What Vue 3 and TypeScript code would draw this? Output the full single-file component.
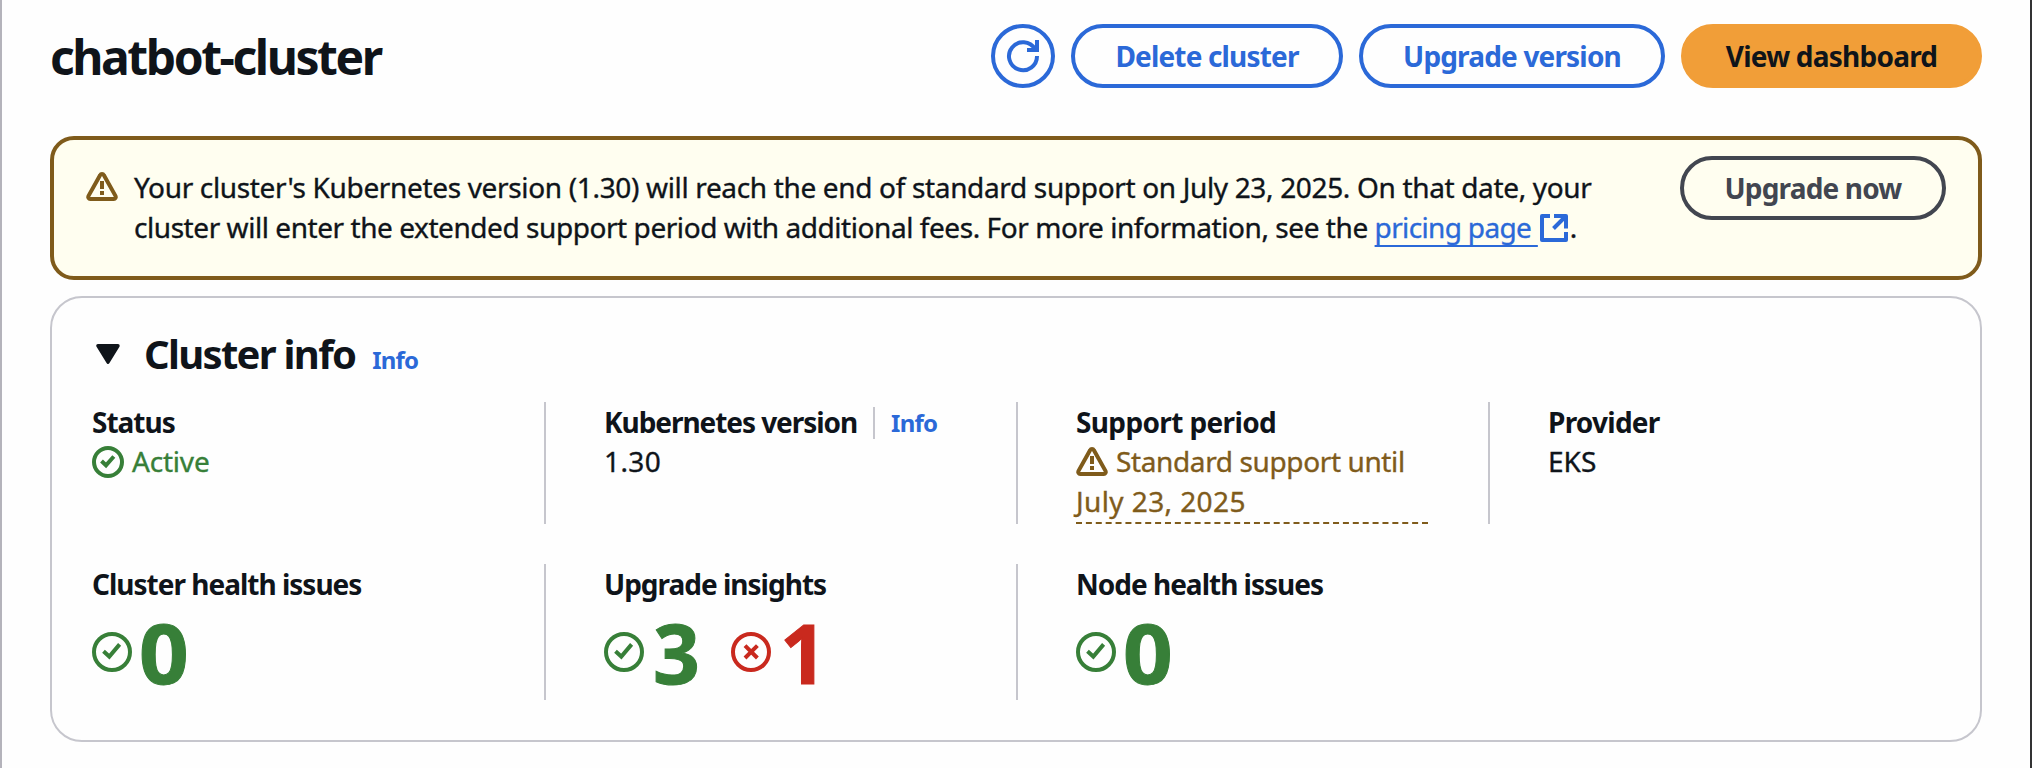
<script setup lang="ts">
interface Metric {
  kind: 'ok' | 'error'
  value: number
}

interface MetricCell {
  title: string
  metrics: Metric[]
}

const metricCells: MetricCell[] = [
  { title: 'Cluster health issues', metrics: [{ kind: 'ok', value: 0 }] },
  {
    title: 'Upgrade insights',
    metrics: [
      { kind: 'ok', value: 3 },
      { kind: 'error', value: 1 },
    ],
  },
  { title: 'Node health issues', metrics: [{ kind: 'ok', value: 0 }] },
]
</script>

<template>
  <main class="page">
    <header class="header">
      <h1 class="title">chatbot-cluster</h1>
      <div class="actions">
        <button class="btn btn-icon" aria-label="Refresh">
          <svg class="icon" viewBox="0 0 32 32">
            <path d="M30 16A14 14 0 1 1 28 9" />
            <path d="M30 0v10H20" />
          </svg>
        </button>
        <button class="btn btn-delete">Delete cluster</button>
        <button class="btn btn-upgrade">Upgrade version</button>
        <button class="btn btn-primary">View dashboard</button>
      </div>
    </header>

    <section class="alert">
      <svg class="icon warning alert-icon" viewBox="0 0 32 32">
        <path d="M14.2 4.1 2.4 25.1a2 2 0 0 0 1.8 2.9h23.6a2 2 0 0 0 1.8-2.9L17.8 4.1a2 2 0 0 0-3.6 0Z" />
        <path d="M16 10v8M16 20v4" />
      </svg>
      <p class="alert-text">
        <span class="line-one">Your cluster's Kubernetes version (1.30) will reach the end of standard support on July 23, 2025. On that date, your</span><br />
        <span class="line-two">cluster will enter the extended support period with additional fees. For more information, see the </span><a class="link">pricing page&nbsp;</a><svg class="icon external" viewBox="0 0 32 32">
          <path d="M12 4H4v24h24v-8" />
          <path d="M16 4h12v12.5M27.5 4.5 15.5 16.5" />
        </svg>.
      </p>
      <button class="btn btn-neutral">Upgrade now</button>
    </section>

    <section class="card">
      <div class="card-head">
        <svg class="caret" viewBox="0 0 24 20">
          <path d="M2 1.8h20L12 18.2Z" />
        </svg>
        <h2 class="card-title">Cluster info</h2>
        <a class="info">Info</a>
      </div>

      <div class="row row-details">
        <div class="cell">
          <h3 class="label">Status</h3>
          <div class="value status">
            <svg class="icon" viewBox="0 0 32 32">
              <circle cx="16" cy="16" r="14" />
              <path d="M9.5 15 14 19.3 21.8 10.5" />
            </svg>
            <span>Active</span>
          </div>
        </div>
        <div class="cell">
          <div class="label-row">
            <h3 class="label">Kubernetes version</h3>
            <a class="info info-divided">Info</a>
          </div>
          <div class="value version">1.30</div>
        </div>
        <div class="cell">
          <h3 class="label label-support">Support period</h3>
          <div class="support">
            <svg class="icon warning support-icon" viewBox="0 0 32 32">
              <path d="M14.2 4.1 2.4 25.1a2 2 0 0 0 1.8 2.9h23.6a2 2 0 0 0 1.8-2.9L17.8 4.1a2 2 0 0 0-3.6 0Z" />
              <path d="M16 10v8M16 20v4" />
            </svg><span class="support-a">Standard support until</span><br /><span class="support-b">July 23, 2025</span>
          </div>
        </div>
        <div class="cell">
          <h3 class="label label-provider">Provider</h3>
          <div class="value">EKS</div>
        </div>
      </div>

      <div class="row row-metrics">
        <div v-for="cell in metricCells" :key="cell.title" class="cell">
          <h3 class="label">{{ cell.title }}</h3>
          <div class="metrics">
            <div v-for="m in cell.metrics" :key="m.kind" class="metric" :class="[m.kind, 'digit-' + m.value]">
              <svg class="metric-icon" viewBox="0 0 40 40">
                <circle cx="20" cy="20" r="18" />
                <path v-if="m.kind === 'ok'" d="M11.5 19.3 17.3 24.6 27.6 12.4" />
                <path v-else d="M14 13.6 26.4 26M26.4 13.6 14 26" />
              </svg>
              <span class="number">{{ m.value }}</span>
            </div>
          </div>
        </div>
      </div>
    </section>
  </main>
</template>

<style>
body {
  margin: 0;
  background: #fefefe;
}
</style>

<style scoped>
.page {
  box-sizing: border-box;
  height: 768px;
  padding: 24px 48px 0;
  border-left: 2px solid #b4b3bb;
  border-right: 2px solid #333334;
  background: #fefefe;
  color: #0f141a;
  font: 400 28px/40px "Noto Sans", "Open Sans", sans-serif;
  overflow: hidden;
}

h1,
h2,
h3,
p {
  margin: 0;
}

.header {
  display: flex;
  justify-content: space-between;
  align-items: center;
  height: 64px;
}

.title {
  padding-top: 2px;
  font-size: 48px;
  line-height: 60px;
  font-weight: 700;
  letter-spacing: -2.45px;
}

.actions {
  display: flex;
  gap: 16px;
}

.btn {
  box-sizing: border-box;
  height: 64px;
  padding: 0;
  border: 4px solid #2b69d8;
  border-radius: 32px;
  background: transparent;
  color: #2b69d8;
  font: 700 28px/40px "Noto Sans", "Open Sans", sans-serif;
  letter-spacing: -0.83px;
  white-space: nowrap;
}

.btn-icon {
  display: flex;
  align-items: center;
  justify-content: center;
  width: 64px;
}

.btn-delete {
  width: 272px;
}

.btn-upgrade {
  width: 306px;
}

.btn-primary {
  width: 301px;
  border-color: #f19e38;
  background: #f19e38;
  color: #0f141a;
  letter-spacing: -0.77px;
}

.icon {
  flex: none;
  width: 32px;
  height: 32px;
  fill: none;
  stroke: currentColor;
  stroke-width: 4;
  overflow: visible;
}

.warning {
  color: #7f5b1b;
}

.alert {
  box-sizing: border-box;
  display: flex;
  align-items: flex-start;
  height: 144px;
  margin-top: 48px;
  padding: 0 32px;
  border: 4px solid #7f5b1b;
  border-radius: 24px;
  background: #fffef0;
}

.alert-icon {
  margin: 31px 16px 0 0;
}

.alert-text,
.value,
.support {
  -webkit-text-stroke: 0.35px currentColor;
}

.alert-text {
  flex: 1;
  padding-top: 27px;
  white-space: nowrap;
}

.line-one {
  letter-spacing: -0.34px;
}

.line-two {
  letter-spacing: -0.44px;
}

.link {
  color: #2b69d8;
  letter-spacing: -0.65px;
  text-decoration: underline 2px;
  text-decoration-skip-ink: none;
  text-underline-offset: 7px;
}

.external {
  color: #2b69d8;
  stroke-linejoin: round;
  vertical-align: -6px;
}

.btn-neutral {
  width: 266px;
  margin-top: 16px;
  border-color: #424650;
  color: #424650;
}

.card {
  box-sizing: border-box;
  height: 446px;
  margin-top: 16px;
  padding: 30px 40px 0;
  border: 2px solid #c6c6cd;
  border-radius: 32px;
}

.card-head {
  display: flex;
  align-items: baseline;
  height: 50px;
}

.caret {
  align-self: flex-start;
  width: 24px;
  height: 20px;
  margin: 16px 24px 0 4px;
  fill: currentColor;
  stroke: currentColor;
  stroke-width: 3.4;
  stroke-linejoin: round;
}

.card-title {
  padding-top: 1px;
  font-size: 40px;
  line-height: 50px;
  font-weight: 700;
  letter-spacing: -1.7px;
}

.info {
  margin-left: 17px;
  color: #2b69d8;
  font-size: 24px;
  font-weight: 700;
  letter-spacing: -0.8px;
}

.row {
  display: grid;
  grid-template-columns: 454px 472px 472px 1fr;
}

.row-details {
  height: 122px;
  margin-top: 24px;
}

.row-metrics {
  height: 136px;
  margin-top: 40px;
}

.cell + .cell {
  margin-left: -2px;
  padding-left: 58px;
  border-left: 2px solid #c6c6cd;
}

.label {
  height: 39px;
  font-size: 28px;
  line-height: 40px;
  font-weight: 700;
  letter-spacing: -1px;
  white-space: nowrap;
}

.label-row {
  display: flex;
  align-items: flex-start;
  height: 39px;
}

.label-row .label {
  letter-spacing: -1.06px;
}

.label-support {
  letter-spacing: -0.63px;
}

.label-provider {
  letter-spacing: -0.75px;
}

.info-divided {
  height: 32px;
  margin: 5px 0 0 16px;
  padding-left: 16px;
  border-left: 2px solid #c6c6cd;
  line-height: 32px;
}

.status {
  display: flex;
  align-items: center;
  gap: 8px;
  color: #377f38;
  letter-spacing: -0.2px;
}

.status .icon {
  margin-top: 2px;
}

.version {
  letter-spacing: 0.4px;
}

.support {
  box-sizing: border-box;
  width: 352px;
  height: 83px;
  border-bottom: 2px dashed #7f5b1b;
  color: #7f5b1b;
  white-space: nowrap;
}

.support-icon {
  margin-right: 8px;
  vertical-align: -6px;
}

.support-a {
  letter-spacing: -0.38px;
}

.support-b {
  letter-spacing: 0.4px;
}

.metrics {
  display: flex;
  align-items: center;
  gap: 31px;
  height: 97px;
}

.metric {
  display: flex;
  align-items: center;
}

.metric-icon {
  width: 40px;
  height: 40px;
  fill: none;
  stroke: currentColor;
  stroke-width: 4;
}

.number {
  margin-left: 7px;
  font-size: 82px;
  line-height: 60px;
  font-weight: 700;
  -webkit-text-stroke: 1px currentColor;
  transform-origin: left center;
}

.digit-0 .number {
  transform: scaleX(1.06);
}

.digit-3 .number {
  margin-left: 9px;
}

.digit-1 .number {
  margin-left: 9px;
}

.ok {
  color: #377f38;
}

.error {
  color: #c9291e;
}
</style>
